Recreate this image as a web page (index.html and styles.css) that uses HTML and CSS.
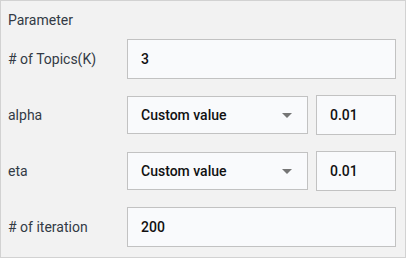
FILE: index.html
```html
<!DOCTYPE html>
<html>

<head>
    <title>Parameter</title>
    <meta charset="utf-8">
    <link rel="stylesheet" href="styles.css">
</head>

<body>
    <section class="panel">
        <h3 class="kop">Parameter</h3>

        <div class="rad">
            <label>
                # of Topics(K)
            </label>
            <div class="felt">
                <input class="tekst" type="text" value="3">
            </div>
        </div>

        <div class="rad">
            <label>alpha</label>
            <div class="felt">
                <div class="vaelg">
                    <span>Custom value</span>
                    <svg class="pil" width="10" height="5" viewBox="0 0 10 5">
                        <path d="M0 0h10L5 5z" fill="#757575" />
                    </svg>
                </div>
                <input class="tekst lille" type="text" value="0.01">
            </div>
        </div>

        <div class="rad">
            <label>eta</label>
            <div class="felt">
                <div class="vaelg">
                    <span>Custom value</span>
                    <svg class="pil" width="10" height="5" viewBox="0 0 10 5">
                        <path d="M0 0h10L5 5z" fill="#757575" />
                    </svg>
                </div>
                <input class="tekst lille" type="text" value="0.01">
            </div>
        </div>

        <div class="rad">
            <label># of iteration</label>
            <div class="felt">
                <input class="tekst" type="text" value="200">
            </div>
        </div>
    </section>
</body>

</html>
```

FILE: styles.css
```css
* {
    box-sizing: border-box;
}

body {
    margin: 0;
    font-family: Roboto, "Liberation Sans", sans-serif;
}

.panel {
    width: 406px;
    height: 258px;
    background-color: #f2f2f2;
    border: 1px solid #d2d2d2;
    padding: 0 9px 10px 7px;
    display: flex;
    flex-direction: column;
    gap: 16px;
}

.kop {
    margin: 0 0 -16px 0;
    height: 38px;
    line-height: 38px;
    font-size: 14px;
    font-weight: 400;
    color: #333a45;
}

.rad {
    display: flex;
    align-items: center;
    height: 40px;
}

.rad label {
    width: 119px;
    flex: none;
    font-size: 14px;
    color: #333a45;
}

.felt {
    flex: 1;
    display: flex;
    align-items: center;
    gap: 8px;
    height: 40px;
}

.tekst {
    height: 40px;
    width: 100%;
    margin: 0;
    border: 1px solid #c2c2c2;
    background-color: #f9fafc;
    padding: 0 13px;
    font-family: Roboto, "Liberation Sans", sans-serif;
    font-size: 14px;
    font-weight: 500;
    color: #111;
    outline: none;
}

.tekst.lille {
    width: 80px;
    flex: none;
}

.vaelg {
    flex: 1;
    height: 38px;
    border: 1px solid #c2c2c2;
    background-color: #f9fafc;
    display: flex;
    align-items: center;
    justify-content: space-between;
    padding: 0 15px 0 13px;
    font-size: 14px;
    font-weight: 500;
    color: #111;
}

.pil {
    display: block;
}
```
